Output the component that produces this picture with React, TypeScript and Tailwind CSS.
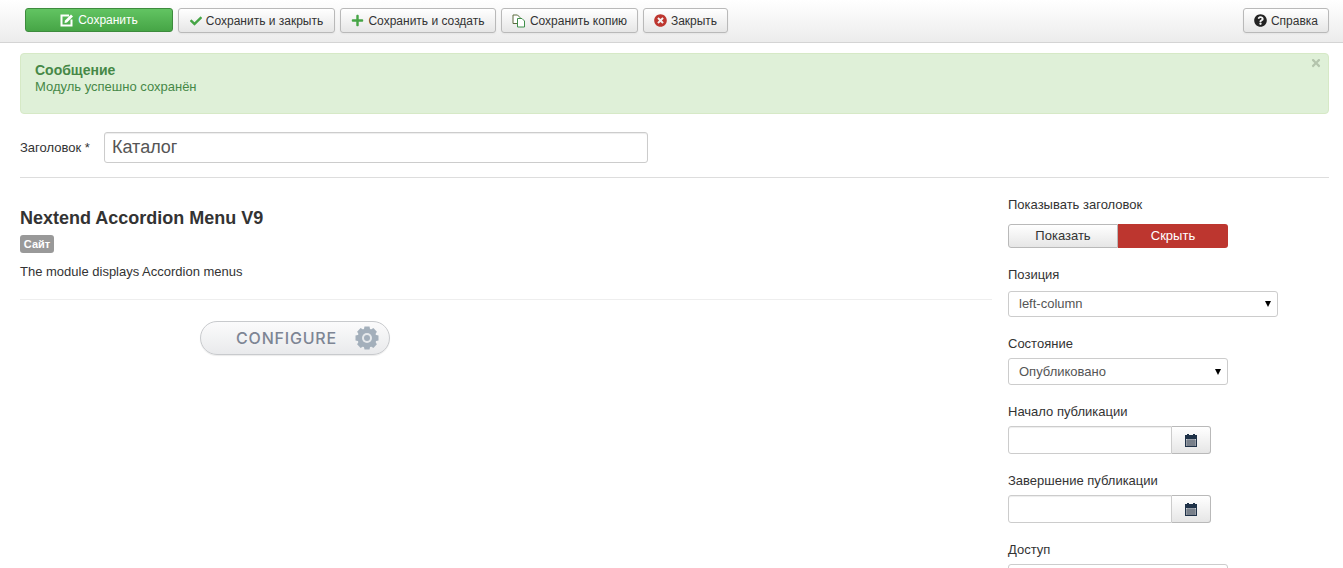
import type { ReactNode } from "react";
import { FaCheck, FaPlus, FaQuestionCircle, FaTimes, FaTimesCircle } from "react-icons/fa";

const toolbarButton =
  "flex h-[25px] items-center justify-center gap-[4px] rounded-[3px] border border-[#b9b9b9] bg-gradient-to-b from-white to-[#e6e6e6] text-[12px] text-[#333] shadow-[0_1px_2px_rgba(0,0,0,0.05)]";

function ToolButton({ width, icon, label }: { width: string; icon: ReactNode; label: string }) {
  return (
    <button className={`${toolbarButton} ${width}`}>
      {icon}
      {label}
    </button>
  );
}

function EditIcon() {
  return (
    <svg width="14" height="14" viewBox="0 0 14 14" fill="none">
      <path d="M9 2.5H1.5V12.5H11.5V6.5" stroke="#fff" strokeWidth="2" />
      <path d="M5 7.5L11 1.5L13 3.5L7 9.5L4.5 10Z" fill="#fff" />
    </svg>
  );
}

function CopyIcon() {
  return (
    <svg width="14" height="14" viewBox="0 0 14 14" fill="none">
      <path d="M1 1H5.5L8 3.5V9.5H1Z" fill="#fff" stroke="#5a6b3c" />
      <path d="M5.5 4.5H10L12.5 7V13H5.5Z" fill="#fff" stroke="#3f8f4a" />
    </svg>
  );
}

function CalendarIcon() {
  return (
    <svg width="12" height="13" viewBox="0 0 12 13">
      <rect y="1" width="12" height="12" fill="#1f3248" />
      <rect x="2" y="0" width="2" height="3" fill="#1f3248" />
      <rect x="8" y="0" width="2" height="3" fill="#1f3248" />
      <rect x="1" y="5" width="10" height="7" fill="#c9ccd2" />
      <path d="M1 7H11M1 9H11M1 11H11M3 5V12M5 5V12M7 5V12M9 5V12" stroke="#4b5563" strokeWidth="0.8" />
    </svg>
  );
}

function GearIcon() {
  const teeth = [0, 45, 90, 135, 180, 225, 270, 315];
  return (
    <svg width="26" height="26" viewBox="0 0 26 26">
      {teeth.map((angle) => (
        <path key={angle} d="M10.5 1.5H15.5L16.5 6H9.5Z" fill="#a3afbb" transform={`rotate(${angle} 13 13)`} />
      ))}
      <circle cx="13" cy="13" r="9.5" fill="#a3afbb" />
      <circle cx="13" cy="13" r="5" fill="#e6e9ec" />
      <circle cx="13" cy="13" r="3" fill="#a3afbb" />
    </svg>
  );
}

function SelectBox({ className, value }: { className: string; value?: string }) {
  return (
    <div className={`relative ${className}`}>
      <select className="h-full w-full appearance-none rounded-[3px] border border-[#ccc] bg-white px-[10px] text-[13px] text-[#555]">
        {value ? <option>{value}</option> : null}
      </select>
      <span className="absolute right-[7px] top-1/2 h-0 w-0 -translate-y-1/2 border-x-[3.5px] border-t-[6px] border-x-transparent border-t-black" />
    </div>
  );
}

function Field({ label, className, children }: { label: string; className: string; children: ReactNode }) {
  return (
    <div className={className}>
      <label className="block h-[18px] text-[13px] leading-[18px] text-[#333]">{label}</label>
      {children}
    </div>
  );
}

function DateField() {
  return (
    <div className="mt-[5px] flex h-[28px] w-[203px]">
      <input className="w-[164px] rounded-l-[3px] border border-[#ccc] bg-white shadow-[inset_0_1px_1px_rgba(0,0,0,0.075)]" />
      <button className="flex w-[39px] items-center justify-center rounded-r-[3px] border border-l-0 border-[#b9b9b9] bg-gradient-to-b from-white to-[#e6e6e6]">
        <CalendarIcon />
      </button>
    </div>
  );
}

export default function App() {
  return (
    <div className="h-[568px] overflow-hidden bg-white font-['Liberation_Sans',Arial,sans-serif] text-[13px] text-[#333]">
      <div className="flex h-[43px] items-start justify-between border-b border-[#d4d4d4] bg-gradient-to-b from-white to-[#ececec] pl-[25px] pr-[14px] pt-[8px]">
        <div className="flex gap-[5px]">
          <button className="flex h-[24px] w-[148px] items-center justify-center gap-[4px] rounded-[3px] border border-[#3d8b3d] bg-gradient-to-b from-[#62c462] to-[#46a546] text-[12px] text-white">
            <EditIcon />
            Сохранить
          </button>
          <ToolButton width="w-[157px]" icon={<FaCheck className="text-[12px] text-[#46a546]" />} label="Сохранить и закрыть" />
          <ToolButton width="w-[156px]" icon={<FaPlus className="text-[13px] text-[#46a546]" />} label="Сохранить и создать" />
          <ToolButton width="w-[137px]" icon={<CopyIcon />} label="Сохранить копию" />
          <ToolButton width="w-[85px]" icon={<FaTimesCircle className="text-[13px] text-[#bd362f]" />} label="Закрыть" />
        </div>
        <ToolButton width="w-[86px]" icon={<FaQuestionCircle className="text-[13px] text-[#222]" />} label="Справка" />
      </div>

      <div className="px-[14px] pl-[20px]">
        <div className="relative mt-[10px] h-[61px] rounded-[4px] border border-[#d6e9c6] bg-[#dff0d8] px-[14px] pt-[8px] text-[13px] text-[#468847]">
          <div className="text-[14px] font-bold leading-[17px]">Сообщение</div>
          <div className="leading-[15px]">Модуль успешно сохранён</div>
          <FaTimes className="absolute right-[6px] top-[3px] text-[12px] text-[#b4c4ad]" />
        </div>

        <div className="mt-[18px] flex items-center">
          <label className="w-[84px] text-[13px]">Заголовок *</label>
          <input
            readOnly
            value="Каталог"
            className="h-[31px] w-[544px] rounded-[3px] border border-[#ccc] bg-white px-[7px] text-[18px] text-[#555] shadow-[inset_0_1px_1px_rgba(0,0,0,0.075)]"
          />
        </div>

        <hr className="mt-[14px] border-[#ddd]" />

        <div className="flex">
          <div className="w-[972px]">
            <h2 className="mt-[29px] text-[18px] font-bold leading-[22px] text-[#333]">Nextend Accordion Menu V9</h2>
            <span className="mt-[6px] block h-[18px] w-[34px] rounded-[3px] bg-[#999] text-center text-[11px] font-bold leading-[18px] text-white">Сайт</span>
            <p className="mt-[10px] text-[13px] leading-[18px]">The module displays Accordion menus</p>
            <hr className="mt-[18px] border-[#eee]" />
            <button className="ml-[180px] mt-[21px] flex h-[34px] w-[190px] items-center justify-end gap-[17px] rounded-full border border-[#c8cacd] bg-gradient-to-b from-[#fbfbfc] to-[#e9eaec] pr-[9px] shadow-[0_1px_1px_rgba(0,0,0,0.08)]">
              <span className="font-['Inter',sans-serif] text-[16px] font-medium tracking-[0.8px] text-[#7d8594]">CONFIGURE</span>
              <GearIcon />
            </button>
          </div>

          <div className="ml-[16px] w-[321px]">
            <Field label="Показывать заголовок" className="mt-[18px]">
              <div className="mt-[10px] flex h-[24px] w-[220px] text-[13px]">
                <button className="w-[110px] rounded-l-[3px] border border-[#b9b9b9] bg-gradient-to-b from-white to-[#e6e6e6] text-[#333]">Показать</button>
                <button className="w-[110px] rounded-r-[3px] bg-[#bd362f] text-white">Скрыть</button>
              </div>
            </Field>
            <Field label="Позиция" className="mt-[18px]">
              <SelectBox className="mt-[7px] h-[26px] w-[270px]" value="left-column" />
            </Field>
            <Field label="Состояние" className="mt-[18px]">
              <SelectBox className="mt-[5px] h-[27px] w-[220px]" value="Опубликовано" />
            </Field>
            <Field label="Начало публикации" className="mt-[18px]">
              <DateField />
            </Field>
            <Field label="Завершение публикации" className="mt-[18px]">
              <DateField />
            </Field>
            <Field label="Доступ" className="mt-[18px]">
              <SelectBox className="mt-[5px] h-[28px] w-[220px]" />
            </Field>
          </div>
        </div>
      </div>
    </div>
  );
}
